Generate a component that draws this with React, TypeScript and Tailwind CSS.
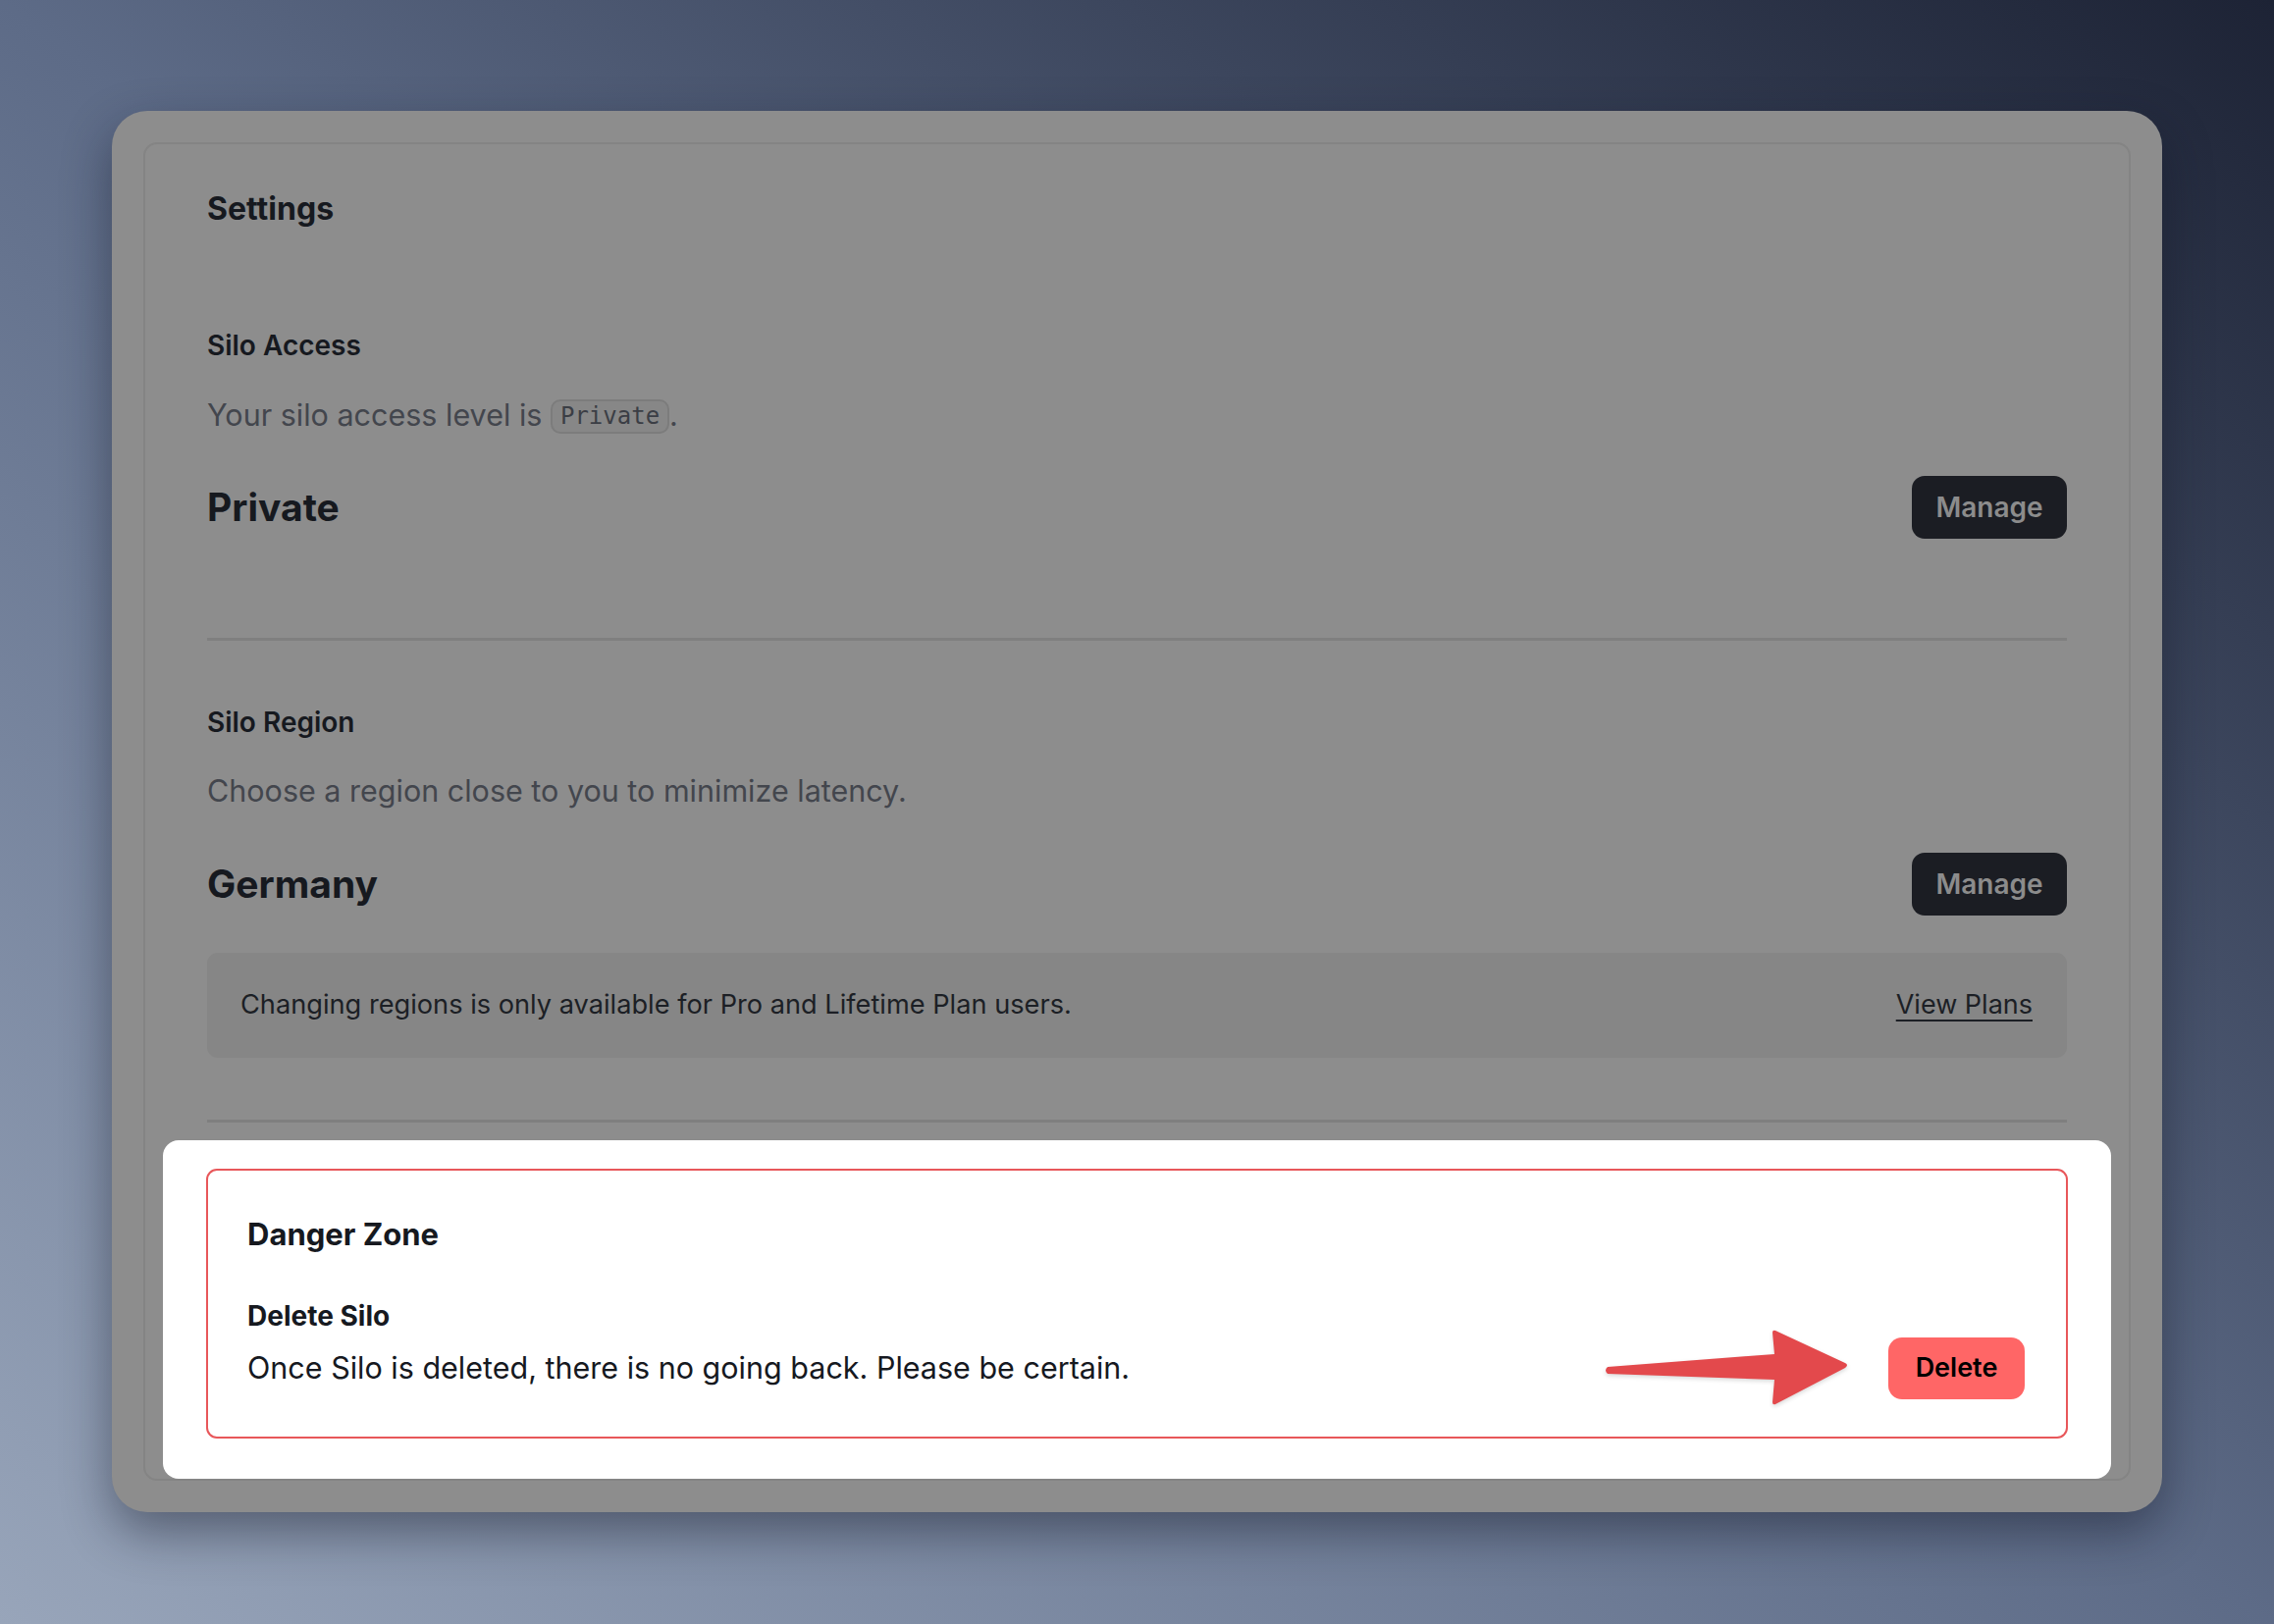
export default function App() {
  return (
    <div
      className="min-h-screen w-full bg-gradient-to-tr from-[#98a5ba] via-[#5d6b87] to-[#1d2335] pl-[114px] pt-[113px] pb-[114px]"
      style={{ fontFamily: "Inter, 'Noto Sans', sans-serif" }}
    >
      <div className="w-[2089px] h-[1428px] rounded-[36px] bg-[#8d8d8d] p-[32px] shadow-[0_20px_50px_rgba(15,20,35,0.45)]">
        <div className="h-full rounded-[14px] border-2 border-[#848484] flex flex-col">
          <div className="px-[63px]">
            <h1 className="mt-[46px] text-[32px] leading-[40px] font-bold text-[#16191f]">Settings</h1>

            <h2 className="mt-[101px] text-[28px] leading-[36px] font-semibold text-[#16191f]">Silo Access</h2>
            <p className="mt-[33px] text-[30.5px] leading-[40px] text-[#43464d]">
              Your silo access level is{" "}
              <code
                className="inline-block align-middle -mt-[2px] rounded-[10px] border-2 border-[#7c7c7c] bg-[#878787] px-[8px] text-[24px] leading-[31px] text-[#3b3e45]"
                style={{ fontFamily: "'DejaVu Sans Mono', 'Liberation Mono', monospace" }}
              >
                Private
              </code>
              .
            </p>
            <div className="mt-[42px] flex items-center justify-between">
              <span className="text-[39px] leading-[48px] font-bold text-[#16191f]">Private</span>
              <button className="h-[64px] w-[158px] rounded-[13px] bg-[#1b1d23] text-[28px] font-semibold text-[#8c8c8c]">
                Manage
              </button>
            </div>

            <div className="mt-[101px] h-[3px] bg-[#7f7f7f]" />

            <h2 className="mt-[65px] text-[28px] leading-[36px] font-semibold text-[#16191f]">Silo Region</h2>
            <p className="mt-[32px] text-[30.5px] leading-[40px] text-[#43464d]">
              Choose a region close to you to minimize latency.
            </p>
            <div className="mt-[43px] flex items-center justify-between">
              <span className="text-[39px] leading-[48px] font-bold text-[#16191f]">Germany</span>
              <button className="h-[64px] w-[158px] rounded-[13px] bg-[#1b1d23] text-[28px] font-semibold text-[#8c8c8c]">
                Manage
              </button>
            </div>
            <div className="mt-[38px] h-[107px] rounded-[11px] bg-[#868686] pl-[34px] pr-[35px] flex items-center justify-between">
              <span className="text-[27.2px] text-[#1c1f25]">
                Changing regions is only available for Pro and Lifetime Plan users.
              </span>
              <a className="text-[27px] text-[#1c1f25] underline underline-offset-[6px] decoration-2">View Plans</a>
            </div>

            <div className="mt-[63px] h-[3px] bg-[#7f7f7f]" />
          </div>

          <div className="mt-[18px] mx-[18px] flex-1 rounded-[16px] bg-white pt-[29px] px-[44px]">
            <div className="h-[275px] rounded-[11px] border-2 border-[#e8575a] pl-[40px] pr-[42px] pt-[47px]">
              <h3 className="text-[31px] leading-[36px] font-bold text-[#16191f]">Danger Zone</h3>
              <div className="mt-[48px] flex items-end justify-between">
                <div>
                  <h4 className="text-[28px] leading-[34px] font-bold text-[#16191f]">Delete Silo</h4>
                  <p className="mt-[17px] text-[30.5px] leading-[38px] text-[#16191f]">
                    Once Silo is deleted, there is no going back. Please be certain.
                  </p>
                </div>
                <div className="flex items-center -mb-[20px]">
                  <svg width="252" height="78" viewBox="0 0 252 78" className="mr-[39px] drop-shadow-[0_2px_2px_rgba(0,0,0,0.15)]">
                    <path
                      d="M5 38 L175 25 L173 3 Q173 0 176 1 L247 34 Q251 36 247 39 L176 76 Q173 77 173 74 L175 51 L5 45 Q1 41.5 5 38 Z"
                      fill="#e3494c"
                    />
                  </svg>
                  <button className="h-[63px] w-[139px] rounded-[14px] bg-[#ff6666] text-[27px] font-semibold text-black">
                    Delete
                  </button>
                </div>
              </div>
            </div>
          </div>
        </div>
      </div>
    </div>
  );
}
